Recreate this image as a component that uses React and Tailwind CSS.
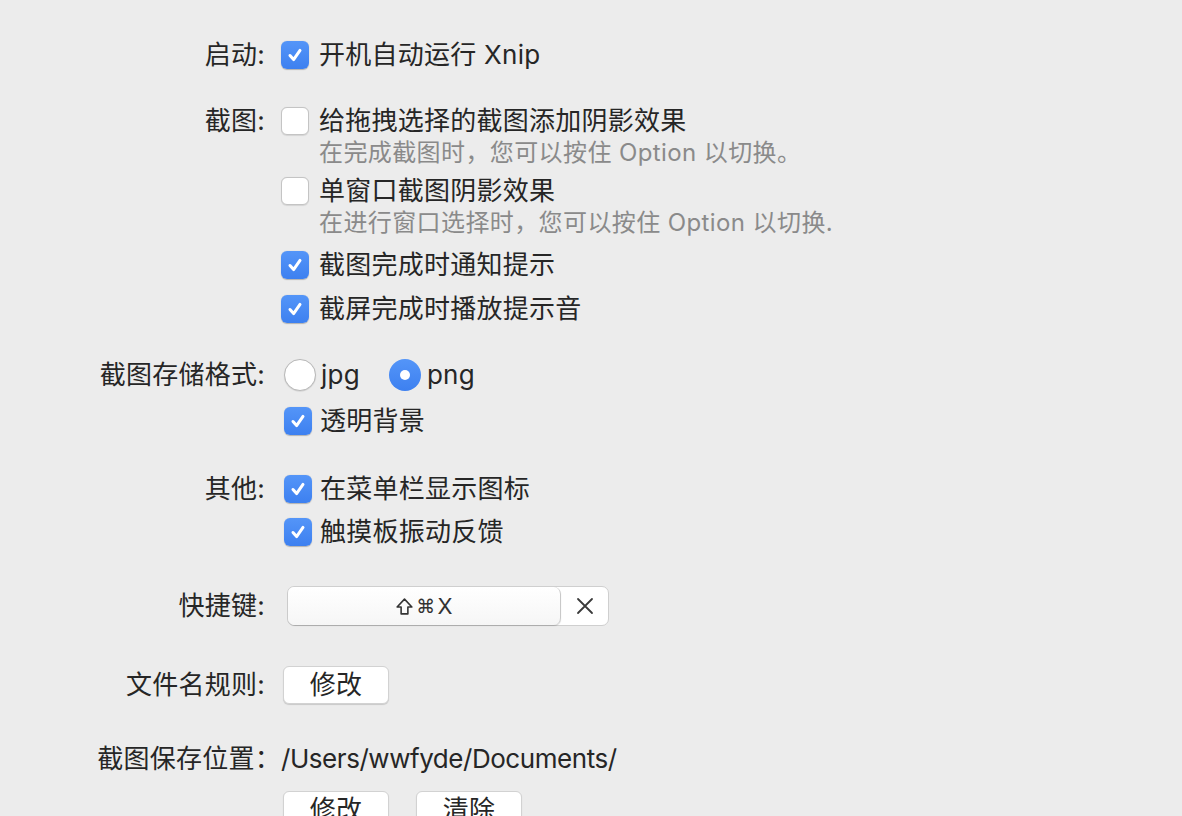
import React from "react";

const FONT = { fontFamily: '"Inter", "Noto Sans CJK SC", sans-serif' };

const CheckBox = ({ checked }) =>
    checked ? (
        <div className="w-[28px] h-[28px] rounded-[6px] bg-gradient-to-b from-[#5495f8] to-[#3d80f0] flex items-center justify-center shrink-0 shadow-[0_0.5px_1px_rgba(0,0,0,0.25)]">
            <svg width="20" height="20" viewBox="0 0 20 20" fill="none">
                <path d="M5 10.5 L8.6 14.6 L15 5.4" stroke="white" strokeWidth="3" strokeLinecap="round" strokeLinejoin="round" />
            </svg>
        </div>
    ) : (
        <div className="w-[28px] h-[28px] rounded-[6px] bg-white border border-[#c4c4c4] shrink-0 shadow-[0_0.5px_1px_rgba(0,0,0,0.1)]" />
    );

const Radio = ({ checked }) =>
    checked ? (
        <div className="w-[32px] h-[32px] rounded-full bg-gradient-to-b from-[#5495f8] to-[#3d80f0] flex items-center justify-center shrink-0">
            <div className="w-[10px] h-[10px] rounded-full bg-white" />
        </div>
    ) : (
        <div className="w-[32px] h-[32px] rounded-full bg-white border border-[#b8b8b8] shrink-0 shadow-[0_0.5px_1px_rgba(0,0,0,0.15)]" />
    );

const Row = ({ label, h = "h-[36px]", className = "", children }) => (
    <div className={`flex items-center ${h} ${className}`}>
        <div className="w-[265px] shrink-0 text-right">{label}</div>
        <div className="flex items-center pl-[16px]">{children}</div>
    </div>
);

const Option = ({ checked, text }) => (
    <div className="flex items-center">
        <CheckBox checked={checked} />
        <span className="ml-[10px] whitespace-nowrap">{text}</span>
    </div>
);

const Hint = ({ text }) => (
    <div className="flex items-center h-[28px]">
        <div className="w-[265px] shrink-0" />
        <div className="pl-[54px] text-[24px] leading-none tracking-[0.4px] text-[#8a8a8a] whitespace-nowrap">{text}</div>
    </div>
);

const Button = ({ text }) => (
    <div className="w-[106px] h-[38px] rounded-[6px] bg-white border border-[#d2d2d2] shadow-[0_1px_1px_rgba(0,0,0,0.15)] flex items-center justify-center text-[26px]">
        {text}
    </div>
);

const ShiftIcon = () => (
    <svg width="19" height="19" viewBox="0 0 18 18" fill="none">
        <path d="M9 2 L16 9.5 H12.2 V16 H5.8 V9.5 H2 Z" stroke="#333" strokeWidth="1.5" strokeLinejoin="round" />
    </svg>
);

export default function App() {
    return (
        <div className="min-h-screen w-full bg-[#ececec] text-[#262626] text-[26px] leading-none tracking-[0.25px] overflow-hidden pt-[37px]" style={FONT}>
            {/* 启动 */}
            <Row label="启动:">
                <Option checked text="开机自动运行 Xnip" />
            </Row>

            {/* 截图 */}
            <Row label="截图:" className="mt-[30px]">
                <Option text="给拖拽选择的截图添加阴影效果" />
            </Row>
            <Hint text="在完成截图时，您可以按住 Option 以切换。" />
            <Row className="mt-[6px]">
                <Option text="单窗口截图阴影效果" />
            </Row>
            <Hint text="在进行窗口选择时，您可以按住 Option 以切换." />
            <Row className="mt-[10px]">
                <Option checked text="截图完成时通知提示" />
            </Row>
            <Row className="mt-[8px]">
                <Option checked text="截屏完成时播放提示音" />
            </Row>

            {/* 格式 */}
            <Row label="截图存储格式:" className="mt-[30px]">
                <div className="flex items-center ml-[3px]">
                    <Radio />
                    <span className="ml-[5px]">jpg</span>
                    <div className="ml-[29px]">
                        <Radio checked />
                    </div>
                    <span className="ml-[6px]">png</span>
                </div>
            </Row>
            <Row className="mt-[10px]">
                <div className="flex items-center ml-[3px]">
                    <CheckBox checked />
                    <span className="ml-[8px]">透明背景</span>
                </div>
            </Row>

            {/* 其他 */}
            <Row label="其他:" className="mt-[32px]">
                <div className="flex items-center ml-[3px]">
                    <CheckBox checked />
                    <span className="ml-[8px]">在菜单栏显示图标</span>
                </div>
            </Row>
            <Row className="mt-[7px]">
                <div className="flex items-center ml-[3px]">
                    <CheckBox checked />
                    <span className="ml-[8px]">触摸板振动反馈</span>
                </div>
            </Row>

            {/* 快捷键 */}
            <Row label="快捷键:" h="h-[40px]" className="mt-[36px]">
                <div className="ml-[6px] w-[322px] h-[40px] rounded-[7px] bg-white border border-[#cfcfcf] flex">
                    <div className="w-[273px] h-full rounded-[7px] bg-gradient-to-b from-white to-[#f6f6f6] border-r border-[#c9c9c9] shadow-[0_1px_1px_rgba(0,0,0,0.18)] flex items-center justify-center text-[22px] text-[#333] gap-[2px]">
                        <ShiftIcon />
                        <span style={{ fontFamily: '"DejaVu Sans", sans-serif' }} className="text-[19px]">⌘</span>
                        <span>X</span>
                    </div>
                    <div className="flex-1 flex items-center justify-center">
                        <svg width="18" height="18" viewBox="0 0 18 18">
                            <path d="M2 2 L16 16 M16 2 L2 16" stroke="#3a3a3a" strokeWidth="1.8" strokeLinecap="round" />
                        </svg>
                    </div>
                </div>
            </Row>

            {/* 文件名规则 */}
            <Row label="文件名规则:" h="h-[38px]" className="mt-[40px]">
                <div className="ml-[2px]">
                    <Button text="修改" />
                </div>
            </Row>

            {/* 保存位置 */}
            <div className="flex items-center h-[36px] mt-[37px]">
                <div className="w-[281px] shrink-0 text-right">截图保存位置：</div>
                <div className="whitespace-nowrap tracking-[-0.45px]">/Users/wwfyde/Documents/</div>
            </div>
            <div className="flex items-center mt-[14px] pl-[283px] gap-[27px]">
                <Button text="修改" />
                <Button text="清除" />
            </div>
        </div>
    );
}
